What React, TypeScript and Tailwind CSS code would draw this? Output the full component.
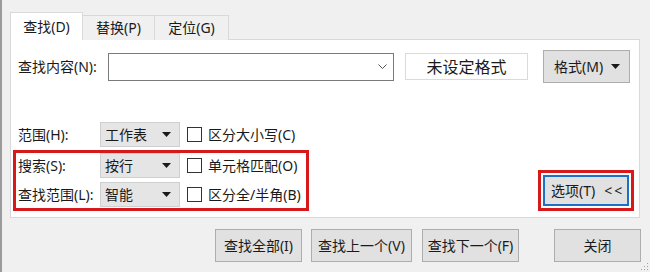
import React from "react";

const font = { fontFamily: '"Noto Sans", "Noto Sans CJK SC", sans-serif' };

function Caret() {
  return (
    <svg width="9" height="5" viewBox="0 0 9 5" className="shrink-0">
      <path d="M0 0 H9 L4.5 5 Z" fill="#1a1a1a" />
    </svg>
  );
}

function Select({ value }: { value: string }) {
  return (
    <div className="w-[80px] h-[25px] flex items-center justify-between pl-[4px] pr-[8px] bg-[#e5e5e5] border border-[#cfcfcf] text-[14px] leading-none">
      <span>{value}</span>
      <Caret />
    </div>
  );
}

function Check({ label }: { label: string }) {
  return (
    <div className="flex items-center ml-[7px]">
      <div className="w-[15px] h-[15px] bg-white border border-[#333333]" />
      <span className="ml-[6px] text-[14px] leading-none whitespace-nowrap">{label}</span>
    </div>
  );
}

function Button({ label, w }: { label: string; w: string }) {
  return (
    <div
      className={`${w} h-[33px] flex items-center justify-center bg-[#e1e1e1] border border-[#adadad] text-[14px] leading-none`}
    >
      {label}
    </div>
  );
}

export default function App() {
  return (
    <div
      style={font}
      className="relative w-[650px] h-[272px] overflow-hidden bg-[#f0f0f0] border-l-2 border-[#9b9b9b] pl-[8px] pt-[12px] text-[#1a1a1a]"
    >
      {/* Tabs */}
      <div className="flex items-end h-[28px] -mb-px relative z-10">
        <div className="w-[73px] h-[28px] flex items-center justify-center bg-white border border-b-0 border-[#d9d9d9] text-[14px] leading-none">
          查找(D)
        </div>
        <div className="w-[73px] -ml-px h-[25px] flex items-center justify-center bg-[#f0f0f0] border border-b-0 border-[#d9d9d9] text-[14px] leading-none">
          替换(P)
        </div>
        <div className="w-[75px] -ml-px h-[25px] flex items-center justify-center bg-[#f0f0f0] border border-b-0 border-[#d9d9d9] text-[14px] leading-none">
          定位(G)
        </div>
      </div>

      {/* Panel */}
      <div className="w-[630px] h-[179px] bg-white border border-[#d9d9d9] flex flex-col">
        {/* Find what row */}
        <div className="flex items-center h-[33px] mt-[10px] pl-[7px]">
          <div className="w-[90px] text-[14px] leading-none whitespace-nowrap">查找内容(N):</div>
          <div className="w-[286px] h-[28px] border border-[#7a7a7a] bg-white flex items-center justify-end pr-[6px]">
            <svg width="9" height="5" viewBox="0 0 9 5">
              <polyline points="0.5,0.5 4.5,4.5 8.5,0.5" fill="none" stroke="#555555" strokeWidth="1" />
            </svg>
          </div>
          <div className="ml-[11px] w-[123px] h-[27px] border border-[#dadada] bg-white flex items-center justify-center text-[16px] leading-none">
            未设定格式
          </div>
          <div className="ml-[15px] w-[87px] h-[33px] bg-[#e1e1e1] border border-[#adadad] flex items-center pl-[10px] pr-[9px] justify-between text-[14px] leading-none">
            <span>格式(M)</span>
            <Caret />
          </div>
        </div>

        {/* Within row */}
        <div className="flex items-center h-[25px] mt-[39px] pl-[7px]">
          <div className="w-[82px] text-[14px] leading-none">范围(H):</div>
          <Select value="工作表" />
          <Check label="区分大小写(C)" />
        </div>

        {/* Search / Look in + Options */}
        <div className="flex items-end justify-between mt-[3px] ml-[2px] mr-[5px]">
          <div className="w-[296px] border-[3px] border-[#d7191c] pl-[2px] pb-[1px] flex flex-col">
            <div className="flex items-center h-[25px]">
              <div className="w-[82px] text-[14px] leading-none">搜索(S):</div>
              <Select value="按行" />
              <Check label="单元格匹配(O)" />
            </div>
            <div className="flex items-center h-[25px] mt-[4px]">
              <div className="w-[82px] text-[14px] leading-none whitespace-nowrap">查找范围(L):</div>
              <Select value="智能" />
              <Check label="区分全/半角(B)" />
            </div>
          </div>
          <div className="w-[96px] h-[41px] border-[3px] border-[#d7191c] p-[2px] bg-white">
            <div className="w-full h-full border-2 border-[#1f6fc5] bg-[#e1e1e1] flex items-center pl-[6px] text-[14px] leading-none whitespace-nowrap">
              <span>选项(T)</span>
              <span className="ml-[9px] tracking-[2px]">&lt;&lt;</span>
            </div>
          </div>
        </div>
      </div>

      {/* Bottom buttons */}
      <div className="flex mt-[11px] ml-[205px]">
        <Button label="查找全部(I)" w="w-[87px]" />
        <div className="ml-[9px]">
          <Button label="查找上一个(V)" w="w-[101px]" />
        </div>
        <div className="ml-[10px]">
          <Button label="查找下一个(F)" w="w-[97px]" />
        </div>
        <div className="ml-[35px]">
          <Button label="关闭" w="w-[87px]" />
        </div>
      </div>

      {/* Resize grip */}
      <svg className="absolute right-[1px] bottom-[1px]" width="10" height="10" viewBox="0 0 10 10">
        <rect x="8" y="2" width="1" height="1" fill="#a0a0a0" />
        <rect x="5" y="5" width="1" height="1" fill="#a0a0a0" />
        <rect x="8" y="5" width="1" height="1" fill="#a0a0a0" />
        <rect x="2" y="8" width="1" height="1" fill="#a0a0a0" />
        <rect x="5" y="8" width="1" height="1" fill="#a0a0a0" />
        <rect x="8" y="8" width="1" height="1" fill="#a0a0a0" />
      </svg>
    </div>
  );
}
